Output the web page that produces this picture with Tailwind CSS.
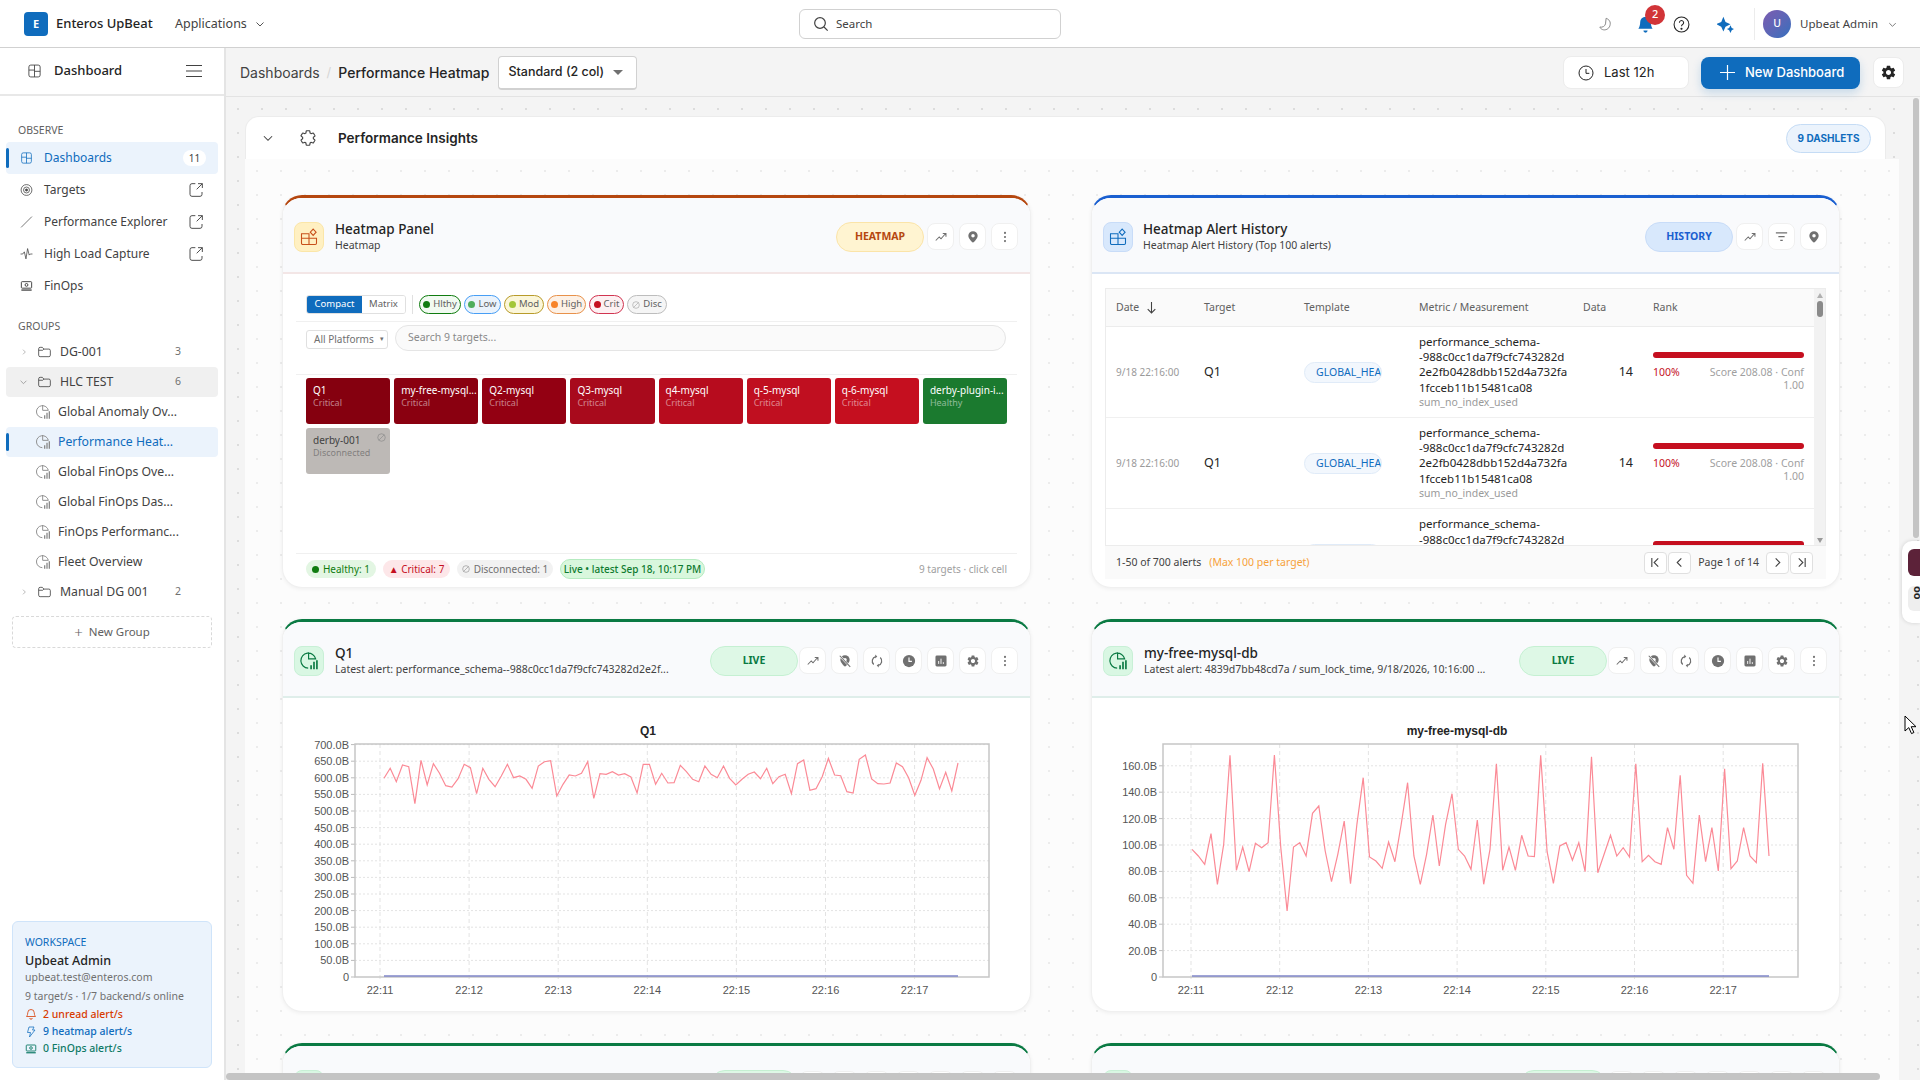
<!DOCTYPE html>
<html lang="en">
<head>
    <meta charset="UTF-8">
    <title>Enteros UpBeat - Performance Heatmap</title>
    <script src="https://cdn.jsdelivr.net/npm/@tailwindcss/browser@4"></script>
</head>
<body class="h-screen w-screen overflow-hidden bg-white text-[#242424] font-['Noto_Sans',sans-serif] relative">

    <!-- Icons -->
    <svg class="hidden">
        <symbol id="i-grid" viewBox="0 0 24 24" fill="none" stroke="currentColor" stroke-width="1.4"><rect x="3" y="2.5" width="18" height="19" rx="3"/><path d="M12 2.5v19M3 10.5h9M12 12.5h9"/></symbol>
        <symbol id="i-target" viewBox="0 0 24 24" fill="none" stroke="currentColor" stroke-width="1.4"><circle cx="12" cy="12" r="10"/><circle cx="12" cy="12" r="5.5"/><circle cx="12" cy="12" r="2" fill="currentColor"/></symbol>
        <symbol id="i-slash" viewBox="0 0 24 24" fill="none" stroke="currentColor" stroke-width="1.3"><path d="M2 22 22 2"/></symbol>
        <symbol id="i-pulse" viewBox="0 0 24 24" fill="none" stroke="currentColor" stroke-width="1.4"><path d="M1 12h4l3-4 3 13 3-19 3 12 2-2h4"/></symbol>
        <symbol id="i-money" viewBox="0 0 24 24" fill="none" stroke="currentColor" stroke-width="1.8"><rect x="2.5" y="4" width="19" height="12" rx="1.5"/><circle cx="12" cy="10" r="2.6"/><path d="M2.5 19.5h19" stroke-width="2.4"/></symbol>
        <symbol id="i-ext" viewBox="0 0 24 24" fill="none" stroke="currentColor" stroke-width="1.4"><path d="M11 2.5H6A3 3 0 0 0 3 5.500v13A3 3 0 0 0 6 21.500h12a3 3 0 0 0 3-3V15"/><path d="M15 2.500h6.500V9M21.500 2.500 13 11"/></symbol>
        <symbol id="i-folder" viewBox="0 0 24 24" fill="none" stroke="currentColor" stroke-width="1.4"><path d="M2 6.500A2.500 2.500 0 0 1 4.500 4h3.800l2.700 3h8.500A2.500 2.500 0 0 1 22 9.500v8a2.500 2.500 0 0 1-2.500 2.500h-15A2.500 2.500 0 0 1 2 17.500z"/><path d="M2 9h7l2-2"/></symbol>
        <symbol id="i-pie" viewBox="0 0 24 24" fill="none" stroke="currentColor" stroke-width="1.400"><path d="M11 20.500A9 9 0 1 1 20 9.500H11.500V1.500"/><path d="M14.500 22v-5M18 22v-9M21.500 22V11" stroke-width="2"/></symbol>
        <symbol id="i-trend" viewBox="0 0 24 24" fill="none" stroke="currentColor" stroke-width="1.800"><path d="M3 18l6-6 3 3 8-9M15 6h5.500v5.500"/></symbol>
        <symbol id="i-pin" viewBox="0 0 24 24" fill="currentColor"><path d="M12 2a8 8 0 0 0-8 8c0 5.500 8 12 8 12s8-6.500 8-12a8 8 0 0 0-8-8zm0 11a3 3 0 1 1 0-6 3 3 0 0 1 0 6z"/></symbol>
        <symbol id="i-kebab" viewBox="0 0 24 24" fill="currentColor"><circle cx="12" cy="5" r="1.800"/><circle cx="12" cy="12" r="1.800"/><circle cx="12" cy="19" r="1.800"/></symbol>
        <symbol id="i-off" viewBox="0 0 24 24"><path fill="currentColor" d="M12 2a8 8 0 0 0-8 8c0 5.500 8 12 8 12s8-6.500 8-12a8 8 0 0 0-8-8z"/><circle cx="12" cy="10" r="3" fill="#fff"/><path d="M3 3l18 19" stroke="#fff" stroke-width="3.500"/><path d="M3 3l18 19" stroke="currentColor" stroke-width="1.800"/></symbol>
        <symbol id="i-sync" viewBox="0 0 24 24" fill="none" stroke="currentColor" stroke-width="2.200"><path d="M6.500 18A8 8 0 0 1 10 4.300M17.500 6A8 8 0 0 1 14 19.700"/><path d="M9 1l3.500 3.200L9 7.500zM15 23l-3.500-3.200L15 16.500z" fill="currentColor" stroke="none"/></symbol>
        <symbol id="i-clockf" viewBox="0 0 24 24"><circle cx="12" cy="12" r="10.500" fill="currentColor"/><path d="M12 6v6.500h5" fill="none" stroke="#fff" stroke-width="2"/></symbol>
        <symbol id="i-report" viewBox="0 0 24 24"><rect x="2.500" y="2.500" width="19" height="19" rx="2.500" fill="currentColor"/><path d="M8 17v-5M12 17V8M16 17v-3" stroke="#fff" stroke-width="1.600"/></symbol>
        <symbol id="i-gear" viewBox="0 0 24 24" fill="currentColor"><path d="M19.140 12.940c.04-.3.06-.61.06-.94 0-.32-.02-.64-.07-.94l2.030-1.580a.49.49 0 0 0 .12-.61l-1.920-3.320a.488.488 0 0 0-.59-.22l-2.390.96c-.5-.38-1.030-.7-1.620-.94l-.36-2.540a.484.484 0 0 0-.48-.41h-3.840c-.24 0-.43.17-.47.41l-.36 2.540c-.59.24-1.130.57-1.620.94l-2.390-.96c-.22-.08-.47 0-.59.22L2.740 8.870c-.12.21-.08.47.12.61l2.030 1.580c-.05.3-.09.63-.09.94s.02.64.07.94l-2.030 1.580a.49.49 0 0 0-.12.61l1.920 3.320c.12.22.37.29.59.22l2.390-.96c.5.38 1.030.7 1.620.94l.36 2.540c.05.24.24.41.48.41h3.840c.24 0 .44-.17.47-.41l.36-2.540c.59-.24 1.130-.56 1.620-.94l2.390.96c.22.08.47 0 .59-.22l1.920-3.320c.12-.22.07-.47-.12-.61l-2.010-1.580zM12 15.600c-1.980 0-3.600-1.620-3.600-3.600s1.620-3.600 3.600-3.600 3.600 1.620 3.600 3.600-1.620 3.600-3.600 3.600z"/></symbol>
        <symbol id="i-chev" viewBox="0 0 24 24" fill="none" stroke="currentColor" stroke-width="1.800"><path d="M5 9l7 7 7-7"/></symbol>
        <symbol id="i-chevr" viewBox="0 0 24 24" fill="none" stroke="currentColor" stroke-width="1.800"><path d="M9 5l7 7-7 7"/></symbol>
        <symbol id="i-heat" viewBox="0 0 24 24" fill="none" stroke="currentColor" stroke-width="1.300"><path d="M3 8h9v13H4.500A1.500 1.500 0 0 1 3 19.500zM3 13.500h18M12 13.500h9v6a1.500 1.500 0 0 1-1.500 1.500H12"/><path d="M17 2.500l3.500 3.700L17 10l-3.500-3.800z"/></symbol>
        <symbol id="i-bell" viewBox="0 0 24 24" fill="none" stroke="currentColor" stroke-width="1.600"><path d="M12 3a6.500 6.500 0 0 0-6.500 6.500c0 5-2.500 7.500-2.500 7.500h18s-2.500-2.500-2.500-7.500A6.500 6.500 0 0 0 12 3z"/><path d="M9.500 20a2.500 2.500 0 0 0 5 0"/></symbol>
        <symbol id="i-bolt" viewBox="0 0 24 24" fill="none" stroke="currentColor" stroke-width="1.500"><path d="M8 2h10l-3 6h5L9 22l2-9H5z"/></symbol>
        <symbol id="i-ban" viewBox="0 0 24 24" fill="none" stroke="currentColor" stroke-width="1.800"><circle cx="12" cy="12" r="10"/><path d="M5 19 19 5"/></symbol>
    </svg>

    <!-- Top bar -->
    <header class="h-[48px] pt-[1px] border-b border-[#d1d1d1] flex items-center relative">
        <div class="w-[24px] h-[24px] ml-[24px] rounded-[4px] bg-[#0f6cbd] text-white text-[11px] font-bold flex items-center justify-center">E</div>
        <span class="ml-[8px] text-[13px] font-medium text-[#242424] w-[119px]">Enteros UpBeat</span>
        <span class="text-[12.500px] text-[#424242]">Applications</span>
        <svg class="w-[12px] h-[12px] ml-[7px] text-[#424242]"><use href="#i-chev"/></svg>
        <div class="absolute left-[799px] top-[9px] w-[262px] h-[30px] border border-[#d1d1d1] rounded-[6px] flex items-center pl-[13px]">
            <svg class="w-[16px] h-[16px] text-[#424242]" viewBox="0 0 24 24" fill="none" stroke="currentColor" stroke-width="1.800"><circle cx="10.500" cy="10.500" r="8"/><path d="M16.500 16.500 22 22"/></svg>
            <span class="ml-[7px] text-[11.500px] text-[#424242]">Search</span>
        </div>
        <div class="ml-auto flex items-center h-full">
            <svg class="w-[15px] h-[15px] text-[#8a8a8a] mr-[24px]" viewBox="0 0 24 24" fill="none" stroke="currentColor" stroke-width="1.600"><path d="M13 2c5 2 8 6 6 12-1.500 5-7 8-12 6-2-1-3.500-2-4-4 4 1 8-1 9-5 .5-3 .500-6 1-9z"/></svg>
            <div class="relative mr-[19px]">
                <svg class="w-[17px] h-[19px] text-[#0f6cbd]" viewBox="0 0 24 24" fill="currentColor"><path d="M12 1a7.500 7.500 0 0 0-7.500 7.500c0 6-2.500 9.500-2.500 9.500h20s-2.500-3.500-2.500-9.500A7.500 7.500 0 0 0 12 1z"/><path d="M9 20.500a3 3 0 0 0 6 0z"/></svg>
                <span class="absolute left-[8px] -top-[10px] w-[20px] h-[20px] rounded-full bg-[#d13438] text-white text-[11px] font-medium flex items-center justify-center">2</span>
            </div>
            <svg class="w-[17px] h-[17px] text-[#242424] mr-[27px]" viewBox="0 0 24 24" fill="none" stroke="currentColor" stroke-width="1.500"><circle cx="12" cy="12" r="10.500"/><path d="M9 9.500a3 3 0 1 1 4.500 2.600c-1 .6-1.500 1.200-1.500 2.400"/><circle cx="12" cy="18" r=".8" fill="currentColor"/></svg>
            <svg class="w-[17px] h-[17px] text-[#0f6cbd]" viewBox="0 0 24 24" fill="currentColor"><path d="M9 1l3 7.500L19 11.500 12 15 9 22 6 15-1 11.500 6 8.500zM19 13l1.800 4L24 18.500 20.800 20 19 24 17.200 20 14 18.500 17.200 17z"/></svg>
            <div class="w-px h-[32px] bg-[#ececec] ml-[20px]"></div>
            <div class="w-[28px] h-[28px] ml-[8px] rounded-full bg-gradient-to-br from-[#7a5bb0] to-[#2f6fbd] text-white text-[10.500px] font-medium flex items-center justify-center">U</div>
            <span class="ml-[9px] text-[11.500px] text-[#424242]">Upbeat Admin</span>
            <svg class="w-[11px] h-[11px] ml-[9px] mr-[22px] text-[#616161]"><use href="#i-chev"/></svg>
        </div>
    </header>

    <div class="flex h-[1032px]">
        <!-- Sidebar -->
        <aside class="w-[226px] shrink-0 border-r-2 border-[#e4e4e4] flex flex-col h-full">
            <div class="h-[48px] shrink-0 border-b-2 border-[#e8e8e8] flex items-center pl-[27px]">
                <svg class="w-[15px] h-[16px] text-[#424242]"><use href="#i-grid"/></svg>
                <span class="ml-[12px] text-[13px] font-medium">Dashboard</span>
                <svg class="ml-auto mr-[22px] w-[16px] h-[14px] text-[#424242]" viewBox="0 0 16 14" fill="none" stroke="currentColor" stroke-width="1.200"><path d="M0 1.500h16M0 7h16M0 12.500h16"/></svg>
            </div>
            <div class="text-[10.500px] text-[#616161] pl-[18px] pt-[27px] pb-[5px] leading-[14px]">OBSERVE</div>
            <nav class="px-[6px] flex flex-col text-[12px]">
                <a class="relative h-[32px] bg-[#ebf3fc] rounded-[4px] flex items-center pl-[14px] pr-[12px] text-[#0f6cbd]">
                    <span class="absolute left-0 top-[6px] bottom-[6px] w-[3px] bg-[#0f6cbd] rounded-full"></span>
                    <svg class="w-[13px] h-[14px]"><use href="#i-grid"/></svg><span class="ml-[11px]">Dashboards</span>
                    <span class="ml-auto w-[23px] h-[16px] rounded-full bg-white text-[#424242] text-[10px] flex items-center justify-center">11</span>
                </a>
                <a class="h-[32px] flex items-center pl-[14px] pr-[14px] text-[#424242]"><svg class="w-[13px] h-[14px]"><use href="#i-target"/></svg><span class="ml-[11px]">Targets</span><svg class="ml-auto w-[16px] h-[16px]"><use href="#i-ext"/></svg></a>
                <a class="h-[32px] flex items-center pl-[14px] pr-[14px] text-[#424242]"><svg class="w-[13px] h-[14px]"><use href="#i-slash"/></svg><span class="ml-[11px]">Performance Explorer</span><svg class="ml-auto w-[16px] h-[16px]"><use href="#i-ext"/></svg></a>
                <a class="h-[32px] flex items-center pl-[14px] pr-[14px] text-[#424242]"><svg class="w-[13px] h-[14px]"><use href="#i-pulse"/></svg><span class="ml-[11px]">High Load Capture</span><svg class="ml-auto w-[16px] h-[16px]"><use href="#i-ext"/></svg></a>
                <a class="h-[32px] flex items-center pl-[14px] pr-[14px] text-[#424242]"><svg class="w-[13px] h-[14px]"><use href="#i-money"/></svg><span class="ml-[11px]">FinOps</span></a>
            </nav>
            <div class="text-[10.500px] text-[#616161] pl-[18px] pt-[17px] pb-[4px] leading-[14px]">GROUPS</div>
            <nav class="px-[6px] flex flex-col text-[12.250px] text-[#424242]">
                <a class="h-[30px] flex items-center pl-[14px] pr-[37px]"><svg class="w-[8px] h-[10px] text-[#8a8a8a]"><use href="#i-chevr"/></svg><svg class="ml-[9px] w-[15px] h-[14px]"><use href="#i-folder"/></svg><span class="ml-[8px]">DG-001</span><span class="ml-auto text-[10.500px] text-[#707070]">3</span></a>
                <a class="h-[30px] flex items-center pl-[12px] pr-[37px] bg-[#f0f0f0] rounded-[4px]"><svg class="w-[11px] h-[10px] text-[#8a8a8a]"><use href="#i-chev"/></svg><svg class="ml-[8px] w-[15px] h-[14px]"><use href="#i-folder"/></svg><span class="ml-[8px]">HLC TEST</span><span class="ml-auto text-[10.500px] text-[#707070]">6</span></a>
                <a class="h-[30px] flex items-center pl-[29px]"><svg class="w-[16px] h-[16px] text-[#8a8a8a]"><use href="#i-pie"/></svg><span class="ml-[7px]">Global Anomaly Ov...</span></a>
                <a class="relative h-[30px] flex items-center pl-[29px] bg-[#ebf3fc] rounded-[4px] text-[#0f6cbd]"><span class="absolute left-0 top-[6px] bottom-[6px] w-[3px] bg-[#0f6cbd] rounded-full"></span><svg class="w-[16px] h-[16px] text-[#8a8a8a]"><use href="#i-pie"/></svg><span class="ml-[7px]">Performance Heat...</span></a>
                <a class="h-[30px] flex items-center pl-[29px]"><svg class="w-[16px] h-[16px] text-[#8a8a8a]"><use href="#i-pie"/></svg><span class="ml-[7px]">Global FinOps Ove...</span></a>
                <a class="h-[30px] flex items-center pl-[29px]"><svg class="w-[16px] h-[16px] text-[#8a8a8a]"><use href="#i-pie"/></svg><span class="ml-[7px]">Global FinOps Das...</span></a>
                <a class="h-[30px] flex items-center pl-[29px]"><svg class="w-[16px] h-[16px] text-[#8a8a8a]"><use href="#i-pie"/></svg><span class="ml-[7px]">FinOps Performanc...</span></a>
                <a class="h-[30px] flex items-center pl-[29px]"><svg class="w-[16px] h-[16px] text-[#8a8a8a]"><use href="#i-pie"/></svg><span class="ml-[7px]">Fleet Overview</span></a>
                <a class="h-[30px] flex items-center pl-[14px] pr-[37px]"><svg class="w-[8px] h-[10px] text-[#8a8a8a]"><use href="#i-chevr"/></svg><svg class="ml-[9px] w-[15px] h-[14px]"><use href="#i-folder"/></svg><span class="ml-[8px]">Manual DG 001</span><span class="ml-auto text-[10.500px] text-[#707070]">2</span></a>
            </nav>
            <div class="mx-[12px] mt-[9px] h-[32px] border border-dashed border-[#d9d9d9] rounded-[4px] flex items-center justify-center text-[11.500px] text-[#616161]">
                <span class="text-[15px] font-light mr-[6px] leading-none">+</span>New Group
            </div>
            <div class="mx-[12px] mt-auto mb-[12px] h-[147px] bg-[#ebf3fc] border border-[#cfe4fa] rounded-[6px] pl-[12px] pt-[12px] flex flex-col">
                <span class="text-[10.500px] text-[#0f6cbd] leading-[17px]">WORKSPACE</span>
                <span class="text-[12.500px] font-medium leading-[19px]">Upbeat Admin</span>
                <span class="text-[10.500px] text-[#707070] leading-[15px]">upbeat.test@enteros.com</span>
                <span class="text-[10.500px] text-[#707070] leading-[18px] mt-[2px]">9 target/s · 1/7 backend/s online</span>
                <span class="flex items-center text-[10.500px] font-medium text-[#d83b01] leading-[18px]"><svg class="w-[12px] h-[12px] mr-[6px]"><use href="#i-bell"/></svg>2 unread alert/s</span>
                <span class="flex items-center text-[10.500px] font-medium text-[#0f6cbd] leading-[17px]"><svg class="w-[12px] h-[12px] mr-[6px]"><use href="#i-bolt"/></svg>9 heatmap alert/s</span>
                <span class="flex items-center text-[10.500px] font-medium text-[#0e7a66] leading-[17px]"><svg class="w-[12px] h-[12px] mr-[6px]"><use href="#i-money"/></svg>0 FinOps alert/s</span>
            </div>
        </aside>

        <!-- Main -->
        <main class="flex-1 min-w-0 flex flex-col bg-[#f4f4f4]">
            <div class="h-[49px] pt-[1px] shrink-0 border-b border-[#e3e3e3] flex items-center pl-[14px] pr-[16px] [font-family:Inter,sans-serif]">
                <span class="text-[14px] text-[#424242]">Dashboards</span>
                <span class="text-[13px] text-[#d6d6d6] mx-[7px]">/</span>
                <span class="text-[14px] font-medium text-[#242424]">Performance Heatmap</span>
                <div class="ml-[9px] w-[139px] h-[34px] bg-white border border-[#d1d1d1] border-b-2 rounded-[4px] flex items-center pl-[9px] text-[12.500px] font-medium text-[#242424]">
                    Standard (2 col)
                    <span class="ml-auto mr-[13px] w-0 h-0 border-x-[5px] border-x-transparent border-t-[5px] border-t-[#707070]"></span>
                </div>
                <div class="ml-auto w-[126px] h-[33px] bg-white border border-[#ececec] rounded-[8px] flex items-center pl-[14px] text-[13px] text-[#242424]">
                    <svg class="w-[16px] h-[16px] mr-[10px]" viewBox="0 0 24 24" fill="none" stroke="currentColor" stroke-width="1.500"><circle cx="12" cy="12" r="10.500"/><path d="M12 6v6.500h5"/></svg>Last 12h
                </div>
                <div class="ml-[12px] w-[159px] h-[32px] bg-[#0f6cbd] rounded-[8px] flex items-center pl-[19px] text-[13px] font-medium text-white shadow-[0_4px_10px_rgba(15,108,189,0.2)]">
                    <svg class="w-[15px] h-[15px] mr-[10px]" viewBox="0 0 15 15" fill="none" stroke="currentColor" stroke-width="1.200"><path d="M7.500 0v15M0 7.500h15"/></svg>New Dashboard
                </div>
                <div class="ml-[13px] w-[31px] h-[31px] bg-white border border-[#ececec] rounded-[8px] flex items-center justify-center">
                    <svg class="w-[17px] h-[17px] text-[#242424]"><use href="#i-gear"/></svg>
                </div>
            </div>

            <div class="flex-1 min-h-0 overflow-hidden pt-[19px] pl-[19px] bg-[radial-gradient(#dcdcdc_1px,transparent_1px)] bg-[size:24px_24px]">
                <!-- Section header -->
                <div class="w-[1641px] h-[43px] bg-white border border-b-0 border-[#ececec] rounded-t-[14px] flex items-center pl-[15px] pr-[14px] [font-family:Inter,sans-serif]">
                    <svg class="w-[14px] h-[14px] text-[#424242]"><use href="#i-chev"/></svg>
                    <svg class="ml-[24px] w-[18px] h-[18px] text-[#424242]" viewBox="0 0 24 24" fill="none" stroke="currentColor" stroke-width="1.500"><path d="M19.140 12.940c.04-.3.06-.61.06-.94 0-.32-.02-.64-.07-.94l2.030-1.580a.49.49 0 0 0 .12-.61l-1.920-3.320a.488.488 0 0 0-.59-.22l-2.390.96c-.5-.38-1.030-.7-1.620-.94l-.36-2.540a.484.484 0 0 0-.48-.41h-3.840c-.24 0-.43.17-.47.41l-.36 2.540c-.59.24-1.130.57-1.620.94l-2.390-.96c-.22-.08-.47 0-.59.22L2.740 8.870c-.12.21-.08.47.12.61l2.030 1.580c-.05.3-.09.63-.09.94s.02.64.07.94l-2.030 1.580a.49.49 0 0 0-.12.61l1.920 3.320c.12.22.37.29.59.22l2.390-.96c.5.38 1.030.7 1.620.94l.36 2.540c.05.24.24.41.48.41h3.840c.24 0 .44-.17.47-.41l.36-2.540c.59-.24 1.130-.56 1.620-.94l2.390.96c.22.08.47 0 .59-.22l1.920-3.320c.12-.22.07-.47-.12-.61l-2.010-1.580z"/></svg>
                    <span class="ml-[21px] text-[13.500px] font-semibold text-[#242424]">Performance Insights</span>
                    <span class="ml-auto w-[85px] h-[29px] rounded-full bg-[#ebf3fc] border border-[#c5dcf5] text-[#0f6cbd] text-[10px] font-bold flex items-center justify-center">9 DASHLETS</span>
                </div>
                <!-- Section body -->
                <div class="w-[1654px] bg-[#fcfcfc] pt-[36px] pl-[37px] bg-[radial-gradient(#ececec_1px,transparent_1px)] bg-[size:24px_24px]">
                    <div id="cards" class="w-[1558px] grid grid-cols-2 gap-x-[60px] gap-y-[31px]">

                        <!-- Heatmap panel -->
                        <section class="h-[393px] bg-white rounded-[20px] border border-[#f0f0f0] border-t-[3px] border-t-[#b5470f] shadow-[0_1px_4px_rgba(0,0,0,0.06)] overflow-hidden flex flex-col">
                            <div class="h-[76px] pt-[3px] shrink-0 bg-[#f9fafc] border-b-2 border-[#f3e6e6] flex items-center pl-[11px] pr-[12px]">
                                <div class="w-[30px] h-[30px] rounded-[8px] bg-[#fff0c2] border border-[#fbe6a8] flex items-center justify-center text-[#c8501a]"><svg class="w-[20px] h-[20px]"><use href="#i-heat"/></svg></div>
                                <div class="ml-[11px] flex-1 min-w-0">
                                    <div class="text-[13.500px] font-medium leading-[18px]">Heatmap Panel</div>
                                    <div class="text-[10.500px] leading-[15px] text-[#424242]">Heatmap</div>
                                </div>
                                <span class="w-[88px] h-[30px] rounded-full bg-[#fff4d1] border border-[#fbe4a8] text-[#b5470f] text-[10.500px] font-bold flex items-center justify-center mr-[3px]">HEATMAP</span>
                                <div class="flex gap-[5px]">
                                    <button class="w-[27px] h-[27px] bg-white border border-[#f0f0f0] rounded-[8px] flex items-center justify-center text-[#707070]"><svg class="w-[14px] h-[14px]"><use href="#i-trend"/></svg></button>
                                    <button class="w-[27px] h-[27px] bg-white border border-[#f0f0f0] rounded-[8px] flex items-center justify-center text-[#707070]"><svg class="w-[14px] h-[14px]"><use href="#i-pin"/></svg></button>
                                    <button class="w-[27px] h-[27px] bg-white border border-[#f0f0f0] rounded-[8px] flex items-center justify-center text-[#707070]"><svg class="w-[14px] h-[14px]"><use href="#i-kebab"/></svg></button>
                                </div>
                            </div>
                            <div class="flex-1 flex flex-col px-[13px] text-[9.500px]">
                                <div class="h-[48px] shrink-0 border-b border-[#f0f0f0] px-[10px] pt-[21px] flex items-start">
                                    <div class="flex h-[19px] border border-[#e0e0e0] rounded-[3px] overflow-hidden">
                                        <span class="w-[55px] bg-[#0f6cbd] text-white flex items-center justify-center">Compact</span>
                                        <span class="w-[43px] bg-white text-[#616161] flex items-center justify-center">Matrix</span>
                                    </div>
                                    <span class="w-px h-[19px] bg-[#e0e0e0] mx-[6px]"></span>
                                    <div class="flex gap-[3px] text-[#616161]">
                                        <span class="h-[19px] w-[42px] rounded-full border border-[#107c10] bg-[#f1faf1] flex items-center justify-center gap-[3px]"><i class="w-[7px] h-[7px] rounded-full bg-[#107c10]"></i>Hlthy</span>
                                        <span class="h-[19px] w-[37px] rounded-full border border-[#479ef5] bg-[#ebf3fc] flex items-center justify-center gap-[3px]"><i class="w-[7px] h-[7px] rounded-full bg-[#4fae5c]"></i>Low</span>
                                        <span class="h-[19px] w-[40px] rounded-full border border-[#b89b2a] bg-[#fbf6d9] flex items-center justify-center gap-[3px]"><i class="w-[7px] h-[7px] rounded-full bg-[#a4c639]"></i>Mod</span>
                                        <span class="h-[19px] w-[39px] rounded-full border border-[#e8914a] bg-[#fdf1e6] flex items-center justify-center gap-[3px]"><i class="w-[7px] h-[7px] rounded-full bg-[#f7842a]"></i>High</span>
                                        <span class="h-[19px] w-[35px] rounded-full border border-[#d13450] bg-[#fdf0f2] flex items-center justify-center gap-[3px]"><i class="w-[7px] h-[7px] rounded-full bg-[#c50f1f]"></i>Crit</span>
                                        <span class="h-[19px] w-[40px] rounded-full border border-[#bdbdbd] bg-[#f5f5f5] flex items-center justify-center gap-[3px]"><svg class="w-[8px] h-[8px] text-[#9e9e9e]"><use href="#i-ban"/></svg>Disc</span>
                                    </div>
                                </div>
                                <div class="h-[53px] shrink-0 border-b border-[#f0f0f0] px-[10px] pt-[2px] flex items-start gap-[7px]">
                                    <div class="mt-[6px] w-[82px] h-[19px] border border-[#e0e0e0] rounded-[3px] flex items-center pl-[7px] text-[#707070] text-[10px]">All Platforms<span class="ml-[6px] text-[7px]">▾</span></div>
                                    <div class="w-[611px] h-[26px] mt-[1px] border border-[#e5e5e5] rounded-full bg-[#fafafa] flex items-center pl-[12px] text-[10.500px] text-[#8a8a8a]">Search 9 targets...</div>
                                </div>
                                <div class="flex-1 px-[10px] pt-[3px]">
                                    <div class="grid grid-cols-8 gap-[4px]">
                                        <div class="h-[46px] rounded-[3px] bg-[#85000f] px-[7px] pt-[5px] text-white"><div class="text-[10px] leading-[14px] whitespace-nowrap">Q1</div><div class="text-[9px] text-white/50 leading-[12px]">Critical</div></div>
                                        <div class="h-[46px] rounded-[3px] bg-[#8a0010] px-[7px] pt-[5px] text-white"><div class="text-[10px] leading-[14px] whitespace-nowrap">my-free-mysql...</div><div class="text-[9px] text-white/50 leading-[12px]">Critical</div></div>
                                        <div class="h-[46px] rounded-[3px] bg-[#930012] px-[7px] pt-[5px] text-white"><div class="text-[10px] leading-[14px] whitespace-nowrap">Q2-mysql</div><div class="text-[9px] text-white/50 leading-[12px]">Critical</div></div>
                                        <div class="h-[46px] rounded-[3px] bg-[#a80a1c] px-[7px] pt-[5px] text-white"><div class="text-[10px] leading-[14px] whitespace-nowrap">Q3-mysql</div><div class="text-[9px] text-white/50 leading-[12px]">Critical</div></div>
                                        <div class="h-[46px] rounded-[3px] bg-[#b70c1e] px-[7px] pt-[5px] text-white"><div class="text-[10px] leading-[14px] whitespace-nowrap">q4-mysql</div><div class="text-[9px] text-white/50 leading-[12px]">Critical</div></div>
                                        <div class="h-[46px] rounded-[3px] bg-[#c00f20] px-[7px] pt-[5px] text-white"><div class="text-[10px] leading-[14px] whitespace-nowrap">q-5-mysql</div><div class="text-[9px] text-white/50 leading-[12px]">Critical</div></div>
                                        <div class="h-[46px] rounded-[3px] bg-[#c50f1f] px-[7px] pt-[5px] text-white"><div class="text-[10px] leading-[14px] whitespace-nowrap">q-6-mysql</div><div class="text-[9px] text-white/50 leading-[12px]">Critical</div></div>
                                        <div class="h-[46px] rounded-[3px] bg-[#1b7a2f] px-[7px] pt-[5px] text-white"><div class="text-[10px] leading-[14px] whitespace-nowrap">derby-plugin-i...</div><div class="text-[9px] text-white/50 leading-[12px]">Healthy</div></div>
                                        <div class="relative h-[46px] rounded-[3px] bg-[#bdb9b6] px-[7px] pt-[5px] text-[#424242]"><div class="text-[10px] leading-[14px] whitespace-nowrap">derby-001</div><div class="text-[9px] text-[#424242]/50 leading-[12px]">Disconnected</div><svg class="absolute right-[4px] top-[5px] w-[9px] h-[9px] text-[#8a8a8a]"><use href="#i-ban"/></svg></div>
                                    </div>
                                </div>
                                <div class="h-[34px] pb-[3px] shrink-0 border-t border-[#f0f0f0] px-[10px] flex items-center gap-[7px] text-[10px]">
                                    <span class="h-[18px] w-[70px] rounded-full bg-[#e3f6e3] text-[#107c10] flex items-center justify-center gap-[4px]"><i class="w-[7px] h-[7px] rounded-full bg-[#107c10]"></i>Healthy: 1</span>
                                    <span class="h-[18px] w-[67px] rounded-full bg-[#fde7e9] text-[#c50f1f] flex items-center justify-center gap-[3px]">▲ Critical: 7</span>
                                    <span class="h-[18px] w-[96px] rounded-full bg-[#f2f2f2] text-[#707070] flex items-center justify-center gap-[4px]"><svg class="w-[8px] h-[8px] text-[#8a8a8a]"><use href="#i-ban"/></svg>Disconnected: 1</span>
                                    <span class="h-[20px] w-[145px] rounded-full bg-[#d9f7dd] border border-[#b5ebc0] text-[#0e7a2f] font-medium flex items-center justify-center">Live • latest Sep 18, 10:17 PM</span>
                                    <span class="ml-auto text-[#a0a0a0]">9 targets · click cell</span>
                                </div>
                            </div>
                        </section>

                        <!-- Alert history -->
                        <section class="h-[393px] bg-white rounded-[20px] border border-[#f0f0f0] border-t-[3px] border-t-[#1a5fd0] shadow-[0_1px_4px_rgba(0,0,0,0.06)] overflow-hidden flex flex-col">
                            <div class="h-[76px] pt-[3px] shrink-0 bg-[#f9fafc] border-b-2 border-[#dbe6f5] flex items-center pl-[11px] pr-[12px]">
                                <div class="w-[30px] h-[30px] rounded-[8px] bg-[#d8e8fc] border border-[#c8dcf8] flex items-center justify-center text-[#0f6cbd]"><svg class="w-[20px] h-[20px]"><use href="#i-heat"/></svg></div>
                                <div class="ml-[10px] flex-1 min-w-0">
                                    <div class="text-[13.500px] font-medium leading-[18px]">Heatmap Alert History</div>
                                    <div class="text-[10.500px] leading-[15px] text-[#424242]">Heatmap Alert History (Top 100 alerts)</div>
                                </div>
                                <span class="w-[88px] h-[30px] rounded-full bg-[#d8e8fc] border border-[#c8dcf8] text-[#1a5fd0] text-[10.500px] font-bold flex items-center justify-center mr-[3px]">HISTORY</span>
                                <div class="flex gap-[5px]">
                                    <button class="w-[27px] h-[27px] bg-white border border-[#f0f0f0] rounded-[8px] flex items-center justify-center text-[#707070]"><svg class="w-[14px] h-[14px]"><use href="#i-trend"/></svg></button>
                                    <button class="w-[27px] h-[27px] bg-white border border-[#f0f0f0] rounded-[8px] flex items-center justify-center text-[#707070]"><svg class="w-[15px] h-[15px]" viewBox="0 0 24 24" fill="none" stroke="currentColor" stroke-width="2"><path d="M3 6h18M7 12h10M10 18h4"/></svg></button>
                                    <button class="w-[27px] h-[27px] bg-white border border-[#f0f0f0] rounded-[8px] flex items-center justify-center text-[#707070]"><svg class="w-[14px] h-[14px]"><use href="#i-pin"/></svg></button>
                                </div>
                            </div>
                            <div class="flex-1 px-[13px] pt-[14px]">
                                <div class="relative h-[258px] border border-[#ececec] overflow-hidden">
                                    <div class="h-[38px] bg-[#fafafa] border-b border-[#ececec] grid grid-cols-[98px_100px_115px_164px_70px_1fr] items-center text-[10.500px] text-[#616161]">
                                        <span class="pl-[10px] flex items-center gap-[6px]">Date<svg class="w-[13px] h-[13px] text-[#424242]" viewBox="0 0 24 24" fill="none" stroke="currentColor" stroke-width="2"><path d="M12 2v20M5 15l7 7 7-7"/></svg></span><span>Target</span><span>Template</span><span>Metric / Measurement</span><span>Data</span><span>Rank</span>
                                    </div>
                                    <div class="h-[91px] pr-[11px] border-b border-[#f0f0f0] grid grid-cols-[98px_100px_115px_164px_70px_1fr] items-center">
                                        <span class="pl-[10px] text-[10px] text-[#9a9a9a]">9/18 22:16:00</span><span class="text-[12.500px]">Q1</span>
                                        <span class="w-[78px] h-[21px] rounded-full bg-[#f2f7fd] border border-[#e0ebf8] pl-[11px] overflow-hidden whitespace-nowrap text-[10.500px] leading-[19px] text-[#0f6cbd]"><span class="block w-[67px] overflow-hidden">GLOBAL_HEATMAP</span></span>
                                        <div class="text-[11.500px] leading-[15.200px] text-[#242424] whitespace-nowrap">performance_schema-<br>-988c0cc1da7f9cfc743282d<br>2e2fb0428dbb152d4a732fa<br>1fcceb11b15481ca08<div class="text-[10.500px] text-[#9a9a9a]">sum_no_index_used</div></div>
                                        <span class="text-right pr-[20px] text-[12.500px]">14</span>
                                        <div class="w-[151px]"><div class="h-[6px] rounded-full bg-[#c50f1f]"></div><div class="flex justify-between mt-[8px] text-[10.500px] leading-[13px]"><span class="text-[#c50f1f]">100%</span><span class="text-right text-[#a0a0a0] w-[100px]">Score 208.08 · Conf 1.00</span></div></div>
                                    </div>
                                    <div class="h-[91px] pr-[11px] border-b border-[#f0f0f0] grid grid-cols-[98px_100px_115px_164px_70px_1fr] items-center">
                                        <span class="pl-[10px] text-[10px] text-[#9a9a9a]">9/18 22:16:00</span><span class="text-[12.500px]">Q1</span>
                                        <span class="w-[78px] h-[21px] rounded-full bg-[#f2f7fd] border border-[#e0ebf8] pl-[11px] overflow-hidden whitespace-nowrap text-[10.500px] leading-[19px] text-[#0f6cbd]"><span class="block w-[67px] overflow-hidden">GLOBAL_HEATMAP</span></span>
                                        <div class="text-[11.500px] leading-[15.200px] text-[#242424] whitespace-nowrap">performance_schema-<br>-988c0cc1da7f9cfc743282d<br>2e2fb0428dbb152d4a732fa<br>1fcceb11b15481ca08<div class="text-[10.500px] text-[#9a9a9a]">sum_no_index_used</div></div>
                                        <span class="text-right pr-[20px] text-[12.500px]">14</span>
                                        <div class="w-[151px]"><div class="h-[6px] rounded-full bg-[#c50f1f]"></div><div class="flex justify-between mt-[8px] text-[10.500px] leading-[13px]"><span class="text-[#c50f1f]">100%</span><span class="text-right text-[#a0a0a0] w-[100px]">Score 208.08 · Conf 1.00</span></div></div>
                                    </div>
                                    <div class="h-[91px] pr-[11px] grid grid-cols-[98px_100px_115px_164px_70px_1fr] items-center">
                                        <span></span><span></span>
                                        <span class="w-[78px] h-[21px] rounded-full bg-[#f2f7fd] border border-[#e0ebf8]"></span>
                                        <div class="text-[11.500px] leading-[15.200px] text-[#242424] whitespace-nowrap">performance_schema-<br>-988c0cc1da7f9cfc743282d<br>2e2fb0428dbb152d4a732fa<br>1fcceb11b15481ca08<div class="text-[10.500px] text-[#9a9a9a]">sum_no_index_used</div></div>
                                        <span></span>
                                        <div class="w-[151px]"><div class="h-[6px] rounded-full bg-[#c50f1f]"></div><div class="h-[21px]"></div></div>
                                    </div>
                                    <!-- table scrollbar -->
                                    <div class="absolute right-0 top-0 bottom-0 w-[11px] bg-[#f2f2f2] flex flex-col items-center pt-[4px]">
                                        <span class="w-0 h-0 border-x-[3px] border-x-transparent border-b-[5px] border-b-[#b0b0b0]"></span>
                                        <span class="w-[6px] h-[16px] mt-[3px] rounded-full bg-[#8a8a8a]"></span>
                                        <span class="mt-auto mb-[2px] w-0 h-0 border-x-[3px] border-x-transparent border-t-[5px] border-t-[#9a9a9a]"></span>
                                    </div>
                                </div>
                                <div class="h-[33px] bg-[#fafafa] flex items-center pl-[11px] pr-[13px] text-[10.500px]">
                                    <span class="text-[#424242]">1-50 of 700 alerts</span><span class="ml-[8px] text-[#f7a23b]">(Max 100 per target)</span>
                                    <div class="ml-auto flex items-center gap-[1px] text-[#424242]">
                                        <span class="w-[23px] h-[22px] bg-white border border-[#e0e0e0] rounded-[4px] flex items-center justify-center"><svg class="w-[11px] h-[11px]" viewBox="0 0 12 12" fill="none" stroke="currentColor" stroke-width="1.200"><path d="M2 1v10M9 1.500 4.500 6 9 10.500"/></svg></span>
                                        <span class="w-[23px] h-[22px] bg-white border border-[#e0e0e0] rounded-[4px] flex items-center justify-center"><svg class="w-[11px] h-[11px]" viewBox="0 0 12 12" fill="none" stroke="currentColor" stroke-width="1.200"><path d="M8 1.500 3.500 6 8 10.500"/></svg></span>
                                        <span class="mx-[6px]">Page 1 of 14</span>
                                        <span class="w-[23px] h-[22px] bg-white border border-[#e0e0e0] rounded-[4px] flex items-center justify-center"><svg class="w-[11px] h-[11px]" viewBox="0 0 12 12" fill="none" stroke="currentColor" stroke-width="1.200"><path d="M4 1.500 8.500 6 4 10.500"/></svg></span>
                                        <span class="w-[23px] h-[22px] bg-white border border-[#e0e0e0] rounded-[4px] flex items-center justify-center"><svg class="w-[11px] h-[11px]" viewBox="0 0 12 12" fill="none" stroke="currentColor" stroke-width="1.200"><path d="M10 1v10M3 1.500 7.500 6 3 10.500"/></svg></span>
                                    </div>
                                </div>
                            </div>
                        </section>

                    </div>
                </div>
            </div>
        </main>
    </div>

    <!-- Overlays: page scrollbars, side tab, cursor -->
    <div class="absolute left-[1913px] top-[98px] w-[6px] h-[440px] rounded-full bg-[#c4c4c4]"></div>
    <div class="absolute left-[226px] top-[1073px] w-[1654px] h-[7px] rounded-full bg-[#c4c4c4]"></div>
    <div class="absolute left-[1902px] top-[541px] w-[18px] h-[82px] bg-white rounded-l-[10px] shadow-[0_0_4px_rgba(0,0,0,0.15)] pl-[6px] pt-[8px]">
        <div class="h-[27px] bg-[#5c2239] rounded-l-[6px]"></div>
        <div class="h-[25px] mt-[10px] bg-[#eeeeee] rounded-l-[6px] overflow-hidden flex items-center pl-[1px] text-[11px] font-bold text-[#242424] [writing-mode:vertical-rl]">oo</div>
    </div>
    <svg class="absolute left-[1904px] top-[715px] w-[14px] h-[20px]" viewBox="0 0 14 20"><path d="M1 1v15l3.800-3.400 2.700 6 2.400-1.100-2.700-5.800H12z" fill="#fff" stroke="#000" stroke-width="1"/></svg>

    <script>
        // Chart data read off the reference, mapped to the svg of each card
        const q1 = [502,472,512,462,467,578,448,522,458,487,524,528,503,460,470,548,472,505,527,495,460,500,495,505,532,465,452,449,555,520,492,495,487,452,562,488,490,482,492,488,498,546,460,460,520,487,516,515,463,482,505,512,465,490,500,465,502,522,505,490,483,503,472,518,497,490,548,458,447,538,533,497,442,492,494,542,546,445,432,504,518,519,516,456,467,500,553,508,440,474,534,484,540,456];
        const myFree = [715,735,760,668,820,700,433,778,708,782,697,710,695,432,710,900,708,695,735,607,585,720,812,730,630,818,640,500,738,750,772,693,752,640,515,735,820,730,612,765,640,548,715,735,775,627,820,715,458,778,708,778,673,735,737,433,722,817,705,695,748,695,782,437,785,730,673,735,710,738,458,752,733,752,760,650,715,493,793,817,612,752,650,780,473,773,750,650,735,755,457,735];

        function chartSvg(c) {
            let s = `<svg width="747" height="312" viewBox="0 0 747 312" class="block">`;
            s += `<text x="365" y="36" text-anchor="middle" font-family="Liberation Sans" font-weight="700" font-size="12" fill="#242424">${c.title}</text>`;
            c.yTicks.forEach((t, i) => {
                const y = c.y0 - i * c.yStep;
                if (i > 0) s += `<line x1="${c.left}" x2="${c.right}" y1="${y}" y2="${y}" stroke="#e3e3e3" stroke-dasharray="2 2"/>`;
                s += `<line x1="${c.left - 4}" x2="${c.left}" y1="${y}" y2="${y}" stroke="#bbb"/>`;
                s += `<text x="${c.left - 6}" y="${y + 4}" text-anchor="end" font-family="Liberation Sans" font-size="11" fill="#555">${t}</text>`;
            });
            for (let i = 0; i < 7; i++) {
                const x = c.tick0 + i * c.tickStep;
                s += `<line x1="${x}" x2="${x}" y1="45" y2="${c.y0 + 4}" stroke="#e3e3e3" stroke-dasharray="4 3"/>`;
                s += `<text x="${x}" y="295" text-anchor="middle" font-family="Liberation Sans" font-size="11" fill="#555">22:1${i + 1}</text>`;
            }
            s += `<rect x="${c.left}" y="45" width="${c.right - c.left}" height="${c.y0 - 45}" fill="none" stroke="#c6c6c6" stroke-width="1.500"/>`;
            const pts = c.data.map((v, i) => `${(c.x0 + i * (c.x1 - c.x0) / (c.data.length - 1)).toFixed(1)},${(v / 3 - 88).toFixed(1)}`).join(" ");
            s += `<polyline points="${pts}" fill="none" stroke="#fb8a96" stroke-width="1.200"/>`;
            s += `<line x1="${c.x0}" x2="${c.x1}" y1="${c.y0 - 1}" y2="${c.y0 - 1}" stroke="#7f86c9" stroke-width="1.500"/>`;
            return s + `</svg>`;
        }

        function chartCard(title, sub, chart) {
            const btn = icon => `<button class="w-[27px] h-[27px] bg-white border border-[#f0f0f0] rounded-[8px] flex items-center justify-center text-[#707070]"><svg class="w-[14px] h-[14px]"><use href="#${icon}"/></svg></button>`;
            return `<section class="h-[393px] bg-white rounded-[20px] border border-[#f0f0f0] border-t-[3px] border-t-[#0a7a43] shadow-[0_1px_4px_rgba(0,0,0,0.06)] overflow-hidden flex flex-col">
                <div class="h-[76px] pt-[3px] shrink-0 bg-[#f9fafc] border-b-2 border-[#dfeeea] flex items-center pl-[11px] pr-[12px]">
                    <div class="w-[30px] h-[30px] shrink-0 rounded-[8px] bg-[#d9f7e3] border border-[#c8f0d6] flex items-center justify-center text-[#0a7a43]"><svg class="w-[20px] h-[20px]"><use href="#i-pie"/></svg></div>
                    <div class="ml-[11px] flex-1 min-w-0 whitespace-nowrap overflow-hidden">
                        <div class="text-[13.500px] font-medium leading-[18px]">${title}</div>
                        <div class="text-[10.500px] leading-[15px] text-[#424242]">${sub}</div>
                    </div>
                    <span class="ml-[10px] shrink-0 w-[88px] h-[30px] rounded-full bg-[#def8e6] border border-[#c5f0d2] text-[#0a7a43] text-[10.500px] font-bold flex items-center justify-center mr-[1px]">LIVE</span>
                    <div class="flex gap-[5px] shrink-0">${["i-trend", "i-off", "i-sync", "i-clockf", "i-report", "i-gear", "i-kebab"].map(btn).join("")}</div>
                </div>
                <div class="pt-[1px]">${chart ? chartSvg(chart) : ""}</div>
            </section>`;
        }

        const q1Ticks = ["0", "50.0B", "100.0B", "150.0B", "200.0B", "250.0B", "300.0B", "350.0B", "400.0B", "450.0B", "500.0B", "550.0B", "600.0B", "650.0B", "700.0B"];
        const myTicks = ["0", "20.0B", "40.0B", "60.0B", "80.0B", "100.0B", "120.0B", "140.0B", "160.0B"];

        const cards = document.getElementById("cards");
        cards.insertAdjacentHTML("beforeend", chartCard("Q1", "Latest alert: performance_schema--988c0cc1da7f9cfc743282d2e2f...", {
            title: "Q1", left: 72, right: 706, y0: 278, yStep: 16.6, yTicks: q1Ticks, tick0: 97, tickStep: 89.1, data: q1, x0: 101, x1: 675
        }));
        cards.insertAdjacentHTML("beforeend", chartCard("my-free-mysql-db", "Latest alert: 4839d7bb48cd7a / sum_lock_time, 9/18/2026, 10:16:00 ...", {
            title: "my-free-mysql-db", left: 71, right: 706, y0: 278, yStep: 26.4, yTicks: myTicks, tick0: 99, tickStep: 88.7, data: myFree, x0: 100, x1: 677
        }));
        cards.insertAdjacentHTML("beforeend", chartCard("Q2-mysql", ""));
        cards.insertAdjacentHTML("beforeend", chartCard("Q3-mysql", ""));
    </script>
</body>
</html>
